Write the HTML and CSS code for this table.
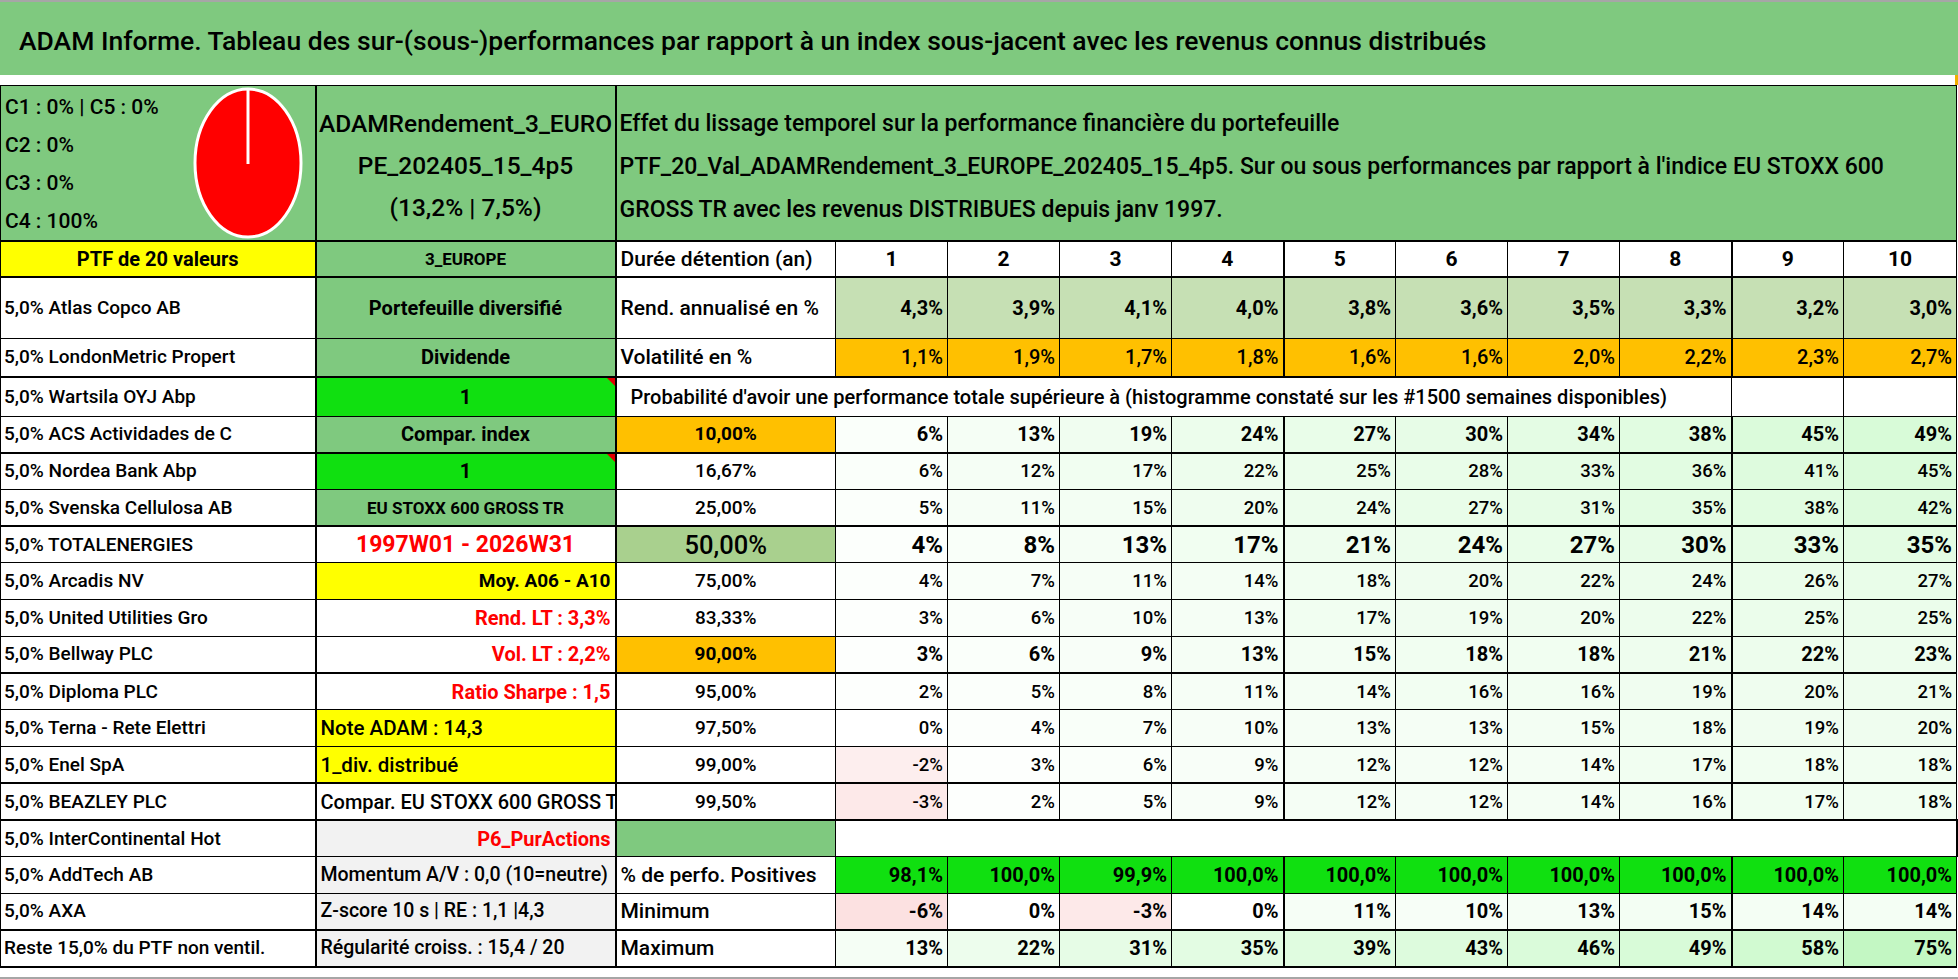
FILE: index.html
```html
<!DOCTYPE html>
<html lang="fr">
<head>
<meta charset="utf-8">
<title>ADAM Informe</title>
<link rel="stylesheet" href="styles.css">
</head>
<body>
<div class="page">
  <div class="title">ADAM Informe. Tableau des sur-(sous-)performances par rapport à un index sous-jacent avec les revenus connus distribués</div>
  <div class="gap"><span class="gap-mark"></span></div>
  <table class="sheet">
    <colgroup>
      <col class="ca"><col class="cb"><col class="cc">
      <col class="cn"><col class="cn"><col class="cn"><col class="cn"><col class="cn">
      <col class="cn"><col class="cn"><col class="cn"><col class="cn"><col class="cl">
    </colgroup>
    <tr class="hdr tb">
      <td class="hA">
        <div class="hA-in">
          <div class="hA-txt">
            <div>C1 : 0% | C5 : 0%</div>
            <div>C2 : 0%</div>
            <div>C3 : 0%</div>
            <div>C4 : 100%</div>
          </div>
          <svg class="pie" width="110" height="152" viewBox="0 0 110 152">
            <ellipse cx="55" cy="76" rx="53" ry="74" fill="#ff0000" stroke="#ffffff" stroke-width="3"/>
            <line x1="55" y1="77" x2="55" y2="2" stroke="#ffffff" stroke-width="3"/>
          </svg>
        </div>
      </td>
      <td class="hB">ADAMRendement_3_EURO<br>PE_202405_15_4p5<br>(13,2% | 7,5%)</td>
      <td class="hC" colspan="11">Effet du lissage temporel sur la performance financière du portefeuille<br>PTF_20_Val_ADAMRendement_3_EUROPE_202405_15_4p5. Sur ou sous performances par rapport à l'indice EU STOXX 600<br>GROSS TR avec les revenus DISTRIBUES depuis janv 1997.</td>
    </tr>
    <tr class="r36 tb">
      <td class="yel ctr b nm2">PTF de 20 valeurs</td>
      <td class="grn ctr b xs">3_EUROPE</td>
      <td class="lbl">Durée détention (an)</td>
      <td class="hd">1</td><td class="hd">2</td><td class="hd">3</td><td class="hd">4</td><td class="hd">5</td>
      <td class="hd">6</td><td class="hd">7</td><td class="hd">8</td><td class="hd">9</td><td class="hd">10</td>
    </tr>
    <tr class="r61">
      <td class="nm">5,0% Atlas Copco AB</td>
      <td class="grn ctr b md">Portefeuille diversifié</td>
      <td class="lbl">Rend. annualisé en %</td>
      <td class="v b rend">4,3%</td><td class="v b rend">3,9%</td><td class="v b rend">4,1%</td><td class="v b rend">4,0%</td><td class="v b rend">3,8%</td>
      <td class="v b rend">3,6%</td><td class="v b rend">3,5%</td><td class="v b rend">3,3%</td><td class="v b rend">3,2%</td><td class="v b rend">3,0%</td>
    </tr>
    <tr class="r39 tb">
      <td class="nm">5,0% LondonMetric Propert</td>
      <td class="grn ctr b md">Dividende</td>
      <td class="lbl">Volatilité en %</td>
      <td class="v vol">1,1%</td><td class="v vol">1,9%</td><td class="v vol">1,7%</td><td class="v vol">1,8%</td><td class="v vol">1,6%</td>
      <td class="v vol">1,6%</td><td class="v vol">2,0%</td><td class="v vol">2,2%</td><td class="v vol">2,3%</td><td class="v vol">2,7%</td>
    </tr>
    <tr class="r39">
      <td class="nm">5,0% Wartsila OYJ Abp</td>
      <td class="lime ctr b md note">1</td>
      <td class="prob" colspan="9">Probabilité d'avoir une performance totale supérieure à (histogramme constaté sur les #1500 semaines disponibles)</td>
      <td></td><td></td>
    </tr>
    <tr class="rr tb">
      <td class="nm">5,0% ACS Actividades de C</td>
      <td class="grn ctr b md">Compar. index</td>
      <td class="pc org b">10,00%</td>
      <td class="v b" style="background:#fafffa">6%</td><td class="v b" style="background:#f5fef5">13%</td><td class="v b" style="background:#f0fdf0">19%</td><td class="v b" style="background:#ecfdec">24%</td><td class="v b" style="background:#e9fde9">27%</td>
      <td class="v b" style="background:#e7fce7">30%</td><td class="v b" style="background:#e4fce4">34%</td><td class="v b" style="background:#e1fce1">38%</td><td class="v b" style="background:#dbfbdb">45%</td><td class="v b" style="background:#d8fbd8">49%</td>
    </tr>
    <tr class="rr">
      <td class="nm">5,0% Nordea Bank Abp</td>
      <td class="lime ctr b md note">1</td>
      <td class="pc">16,67%</td>
      <td class="v" style="background:#fafffa">6%</td><td class="v" style="background:#f5fef5">12%</td><td class="v" style="background:#f1fef1">17%</td><td class="v" style="background:#edfded">22%</td><td class="v" style="background:#ebfdeb">25%</td>
      <td class="v" style="background:#e9fde9">28%</td><td class="v" style="background:#e5fce5">33%</td><td class="v" style="background:#e2fce2">36%</td><td class="v" style="background:#defbde">41%</td><td class="v" style="background:#dbfbdb">45%</td>
    </tr>
    <tr class="rr tb">
      <td class="nm">5,0% Svenska Cellulosa AB</td>
      <td class="grn ctr b xxs">EU STOXX 600 GROSS TR</td>
      <td class="pc">25,00%</td>
      <td class="v" style="background:#fbfffb">5%</td><td class="v" style="background:#f6fef6">11%</td><td class="v" style="background:#f3fef3">15%</td><td class="v" style="background:#effdef">20%</td><td class="v" style="background:#ecfdec">24%</td>
      <td class="v" style="background:#e9fde9">27%</td><td class="v" style="background:#e6fce6">31%</td><td class="v" style="background:#e3fce3">35%</td><td class="v" style="background:#e1fce1">38%</td><td class="v" style="background:#ddfbdd">42%</td>
    </tr>
    <tr class="rr">
      <td class="nm">5,0% TOTALENERGIES</td>
      <td class="ctr b period red">1997W01 - 2026W31</td>
      <td class="pc g50 big50">50,00%</td>
      <td class="v b big" style="background:#fcfffc">4%</td><td class="v b big" style="background:#f9fff9">8%</td><td class="v b big" style="background:#f5fef5">13%</td><td class="v b big" style="background:#f1fef1">17%</td><td class="v b big" style="background:#eefdee">21%</td>
      <td class="v b big" style="background:#ecfdec">24%</td><td class="v b big" style="background:#e9fde9">27%</td><td class="v b big" style="background:#e7fce7">30%</td><td class="v b big" style="background:#e5fce5">33%</td><td class="v b big" style="background:#e3fce3">35%</td>
    </tr>
    <tr class="rr">
      <td class="nm">5,0% Arcadis NV</td>
      <td class="yel rgt b moy">Moy. A06 - A10</td>
      <td class="pc">75,00%</td>
      <td class="v" style="background:#fcfffc">4%</td><td class="v" style="background:#f9fff9">7%</td><td class="v" style="background:#f6fef6">11%</td><td class="v" style="background:#f4fef4">14%</td><td class="v" style="background:#f1fef1">18%</td>
      <td class="v" style="background:#effdef">20%</td><td class="v" style="background:#edfded">22%</td><td class="v" style="background:#ecfdec">24%</td><td class="v" style="background:#eafdea">26%</td><td class="v" style="background:#e9fde9">27%</td>
    </tr>
    <tr class="rr">
      <td class="nm">5,0% United Utilities Gro</td>
      <td class="rgt b md red">Rend. LT : 3,3%</td>
      <td class="pc">83,33%</td>
      <td class="v" style="background:#fdfffd">3%</td><td class="v" style="background:#fafffa">6%</td><td class="v" style="background:#f7fef7">10%</td><td class="v" style="background:#f5fef5">13%</td><td class="v" style="background:#f1fef1">17%</td>
      <td class="v" style="background:#f0fdf0">19%</td><td class="v" style="background:#effdef">20%</td><td class="v" style="background:#edfded">22%</td><td class="v" style="background:#ebfdeb">25%</td><td class="v" style="background:#ebfdeb">25%</td>
    </tr>
    <tr class="rr tb">
      <td class="nm">5,0% Bellway PLC</td>
      <td class="rgt b md red">Vol. LT : 2,2%</td>
      <td class="pc org b">90,00%</td>
      <td class="v b" style="background:#fdfffd">3%</td><td class="v b" style="background:#fafffa">6%</td><td class="v b" style="background:#f8fef8">9%</td><td class="v b" style="background:#f5fef5">13%</td><td class="v b" style="background:#f3fef3">15%</td>
      <td class="v b" style="background:#f1fef1">18%</td><td class="v b" style="background:#f1fef1">18%</td><td class="v b" style="background:#eefdee">21%</td><td class="v b" style="background:#edfded">22%</td><td class="v b" style="background:#edfded">23%</td>
    </tr>
    <tr class="rr">
      <td class="nm">5,0% Diploma PLC</td>
      <td class="rgt b md red">Ratio Sharpe : 1,5</td>
      <td class="pc">95,00%</td>
      <td class="v" style="background:#fdfffd">2%</td><td class="v" style="background:#fbfffb">5%</td><td class="v" style="background:#f9fff9">8%</td><td class="v" style="background:#f6fef6">11%</td><td class="v" style="background:#f4fef4">14%</td>
      <td class="v" style="background:#f2fef2">16%</td><td class="v" style="background:#f2fef2">16%</td><td class="v" style="background:#f0fdf0">19%</td><td class="v" style="background:#effdef">20%</td><td class="v" style="background:#eefdee">21%</td>
    </tr>
    <tr class="rr">
      <td class="nm">5,0% Terna - Rete Elettri</td>
      <td class="yel lg">Note ADAM : 14,3</td>
      <td class="pc">97,50%</td>
      <td class="v">0%</td><td class="v" style="background:#fcfffc">4%</td><td class="v" style="background:#f9fff9">7%</td><td class="v" style="background:#f7fef7">10%</td><td class="v" style="background:#f5fef5">13%</td>
      <td class="v" style="background:#f5fef5">13%</td><td class="v" style="background:#f3fef3">15%</td><td class="v" style="background:#f1fef1">18%</td><td class="v" style="background:#f0fdf0">19%</td><td class="v" style="background:#effdef">20%</td>
    </tr>
    <tr class="rr tb">
      <td class="nm">5,0% Enel SpA</td>
      <td class="yel lg">1_div. distribué</td>
      <td class="pc">99,00%</td>
      <td class="v" style="background:#fdeeee">-2%</td><td class="v" style="background:#fdfffd">3%</td><td class="v" style="background:#fafffa">6%</td><td class="v" style="background:#f8fef8">9%</td><td class="v" style="background:#f5fef5">12%</td>
      <td class="v" style="background:#f5fef5">12%</td><td class="v" style="background:#f4fef4">14%</td><td class="v" style="background:#f1fef1">17%</td><td class="v" style="background:#f1fef1">18%</td><td class="v" style="background:#f1fef1">18%</td>
    </tr>
    <tr class="rr tb">
      <td class="nm">5,0% BEAZLEY PLC</td>
      <td class="clip">Compar. EU STOXX 600 GROSS TR</td>
      <td class="pc">99,50%</td>
      <td class="v" style="background:#fde9e9">-3%</td><td class="v" style="background:#fdfffd">2%</td><td class="v" style="background:#fbfffb">5%</td><td class="v" style="background:#f8fef8">9%</td><td class="v" style="background:#f5fef5">12%</td>
      <td class="v" style="background:#f5fef5">12%</td><td class="v" style="background:#f4fef4">14%</td><td class="v" style="background:#f2fef2">16%</td><td class="v" style="background:#f1fef1">17%</td><td class="v" style="background:#f1fef1">18%</td>
    </tr>
    <tr class="rr">
      <td class="nm">5,0% InterContinental Hot</td>
      <td class="gry rgt b md red">P6_PurActions</td>
      <td class="grn"></td>
      <td class="void"></td><td class="void"></td><td class="void"></td><td class="void"></td><td class="void"></td>
      <td class="void"></td><td class="void"></td><td class="void"></td><td class="void"></td><td class="void last"></td>
    </tr>
    <tr class="rr">
      <td class="nm">5,0% AddTech AB</td>
      <td class="gry sm">Momentum A/V : 0,0 (10=neutre)</td>
      <td class="lbl">% de perfo. Positives</td>
      <td class="v b lime">98,1%</td><td class="v b lime">100,0%</td><td class="v b lime">99,9%</td><td class="v b lime">100,0%</td><td class="v b lime">100,0%</td>
      <td class="v b lime">100,0%</td><td class="v b lime">100,0%</td><td class="v b lime">100,0%</td><td class="v b lime">100,0%</td><td class="v b lime">100,0%</td>
    </tr>
    <tr class="rr tb">
      <td class="nm">5,0% AXA</td>
      <td class="gry sm">Z-score 10 s | RE : 1,1 |4,3</td>
      <td class="lbl">Minimum</td>
      <td class="v b" style="background:#fce1e1">-6%</td><td class="v b">0%</td><td class="v b" style="background:#fde9e9">-3%</td><td class="v b">0%</td><td class="v b" style="background:#f6fef6">11%</td>
      <td class="v b" style="background:#f7fef7">10%</td><td class="v b" style="background:#f5fef5">13%</td><td class="v b" style="background:#f3fef3">15%</td><td class="v b" style="background:#f4fef4">14%</td><td class="v b" style="background:#f4fef4">14%</td>
    </tr>
    <tr class="rr tb">
      <td class="nm">Reste 15,0% du PTF non ventil.</td>
      <td class="gry sm">Régularité croiss. : 15,4 / 20</td>
      <td class="lbl">Maximum</td>
      <td class="v b" style="background:#f5fef5">13%</td><td class="v b" style="background:#edfded">22%</td><td class="v b" style="background:#e6fce6">31%</td><td class="v b" style="background:#e3fce3">35%</td><td class="v b" style="background:#e0fce0">39%</td>
      <td class="v b" style="background:#ddfbdd">43%</td><td class="v b" style="background:#dafbda">46%</td><td class="v b" style="background:#d8fbd8">49%</td><td class="v b" style="background:#d1fad1">58%</td><td class="v b" style="background:#c3f7c3">75%</td>
    </tr>
  </table>
</div>
</body>
</html>
```

FILE: styles.css
```css
* { box-sizing: border-box; }
html, body { margin: 0; padding: 0; background: #ffffff; }
body {
  width: 1958px;
  height: 979px;
  overflow: hidden;
  font-family: Roboto, "Liberation Sans", Arial, sans-serif;
  font-weight: 500;
  color: #000000;
}
.page {
  height: 979px;
  border-top: 2px solid #a6a6a6;
  border-bottom: 2px solid #a6a6a6;
}
.title {
  height: 73px;
  background: #7fc97f;
  display: flex;
  align-items: center;
  padding: 4px 0 0 19px;
  font-size: 26.5px;
  white-space: nowrap;
}
.gap { height: 10px; position: relative; }
.gap-mark {
  position: absolute;
  right: 0;
  top: 0;
  width: 3px;
  height: 10px;
  background: #f0b000;
}
.sheet {
  border-collapse: collapse;
  table-layout: fixed;
  width: 1956px;
}
.ca { width: 315px; }
.cb { width: 300px; }
.cc { width: 220px; }
.cn { width: 112px; }
.cl { width: 113px; }

.sheet td {
  border: 1px solid #000000;
  padding: 0 4px;
  white-space: nowrap;
  overflow: hidden;
  vertical-align: middle;
  font-size: 20px;
  line-height: 24px;
}
.sheet td:nth-child(1),
.sheet td:nth-child(2),
.sheet td:nth-child(7),
.sheet td:nth-child(11) { border-right-width: 2px; }
.sheet tr.tb td { border-bottom-width: 2px; }

.hdr { height: 155px; }
.r36 { height: 36px; }
.r61 { height: 61px; }
.r39 { height: 39px; }
.rr { height: 36.73px; }

/* header block */
.sheet td.hA { background: #7fc97f; padding: 0 12px 0 4px; }
.hA-in { display: flex; justify-content: space-between; align-items: center; }
.hA-txt { font-size: 21px; line-height: 38px; padding-top: 2px; }
.pie { display: block; }
.sheet td.hB {
  background: #7fc97f;
  text-align: center;
  font-size: 24.5px;
  line-height: 42px;
  padding: 6px 2px 0 2px;
}
.sheet td.hC {
  background: #7fc97f;
  text-align: left;
  font-size: 23px;
  line-height: 43px;
  padding: 6px 0 0 3px;
}

/* cell kinds */
.sheet td.nm { font-size: 19px; padding-left: 3px; }
.sheet td.nm2 { font-size: 20px; }
.sheet td.lbl { font-size: 21px; }
.sheet td.hd { text-align: center; font-weight: 700; font-size: 21px; }
.sheet td.v { text-align: right; font-size: 18.5px; padding-right: 4px; }
.sheet td.v.b { font-size: 20px; }
.sheet td.v.big { font-size: 24px; }
.sheet td.vol { background: #ffc000; font-size: 20px; }
.sheet td.rend { background: #c6e0b4; }
.sheet td.pc { text-align: center; font-size: 19px; }
.sheet td.big50 { font-size: 25.5px; }
.sheet td.prob {
  text-align: left;
  font-size: 20px;
  padding-left: 14px;
  border-right: none;
}

.ctr { text-align: center; }
.rgt { text-align: right; }
.b { font-weight: 700; }
.sheet td.xs { font-size: 17px; }
.sheet td.xxs { font-size: 17px; }
.sheet td.sm { font-size: 19.5px; }
.sheet td.md { font-size: 20px; }
.sheet td.lg { font-size: 20.5px; }
.sheet td.period { font-size: 23px; }
.sheet td.moy { font-size: 19px; }
.sheet td.clip { font-size: 20px; text-overflow: clip; }

.grn { background: #7fc97f; }
.yel { background: #ffff00; }
.lime { background: #10e010; }
.org { background: #ffc000; }
.g50 { background: #a9d08e; }
.gry { background: #f2f2f2; }
.red { color: #ff0000; }

.note { position: relative; }
.note::after {
  content: "";
  position: absolute;
  top: 0;
  right: 0;
  border-top: 8px solid #e00000;
  border-left: 8px solid transparent;
}
.sheet td.void {
  border-left: none;
  border-right: none;
  background: #ffffff;
}
.sheet td.void.last { border-right: 2px solid #000000; }
```
